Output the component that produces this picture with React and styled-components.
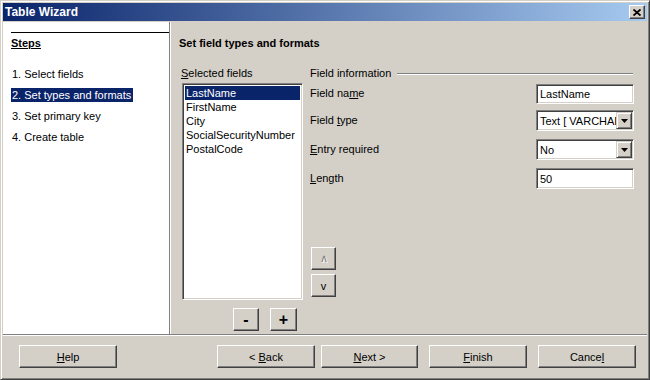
import styled, { createGlobalStyle } from "styled-components"

const GlobalStyle = createGlobalStyle`
    html, body {
        margin: 0;
        padding: 0;
        background: #d4d0c8;
    }
    * {
        box-sizing: border-box;
    }
`

const Window = styled.div`
    width: 650px;
    height: 380px;
    background-color: #d4d0c8;
    border: 1px solid;
    border-color: #d4d0c8 #404040 #404040 #d4d0c8;
    box-shadow: inset 1px 1px #ffffff, inset -1px -1px #808080;
    padding: 2px;
    display: flex;
    flex-direction: column;
    font-family: "Liberation Sans", Arial, sans-serif;
    font-size: 11px;
    color: #000;
`

const TitleBar = styled.div`
    height: 18px;
    margin-bottom: 1px;
    background: linear-gradient(to right, #0a246a, #a6caf0);
    display: flex;
    align-items: center;
    justify-content: space-between;
    padding: 0 2px 0 2px;
    color: #fff;
    font-weight: bold;
    font-size: 12px;
`

const CloseButton = styled.div`
    width: 16px;
    height: 14px;
    background: #d4d0c8;
    border: 1px solid;
    border-color: #ffffff #404040 #404040 #ffffff;
    box-shadow: inset -1px -1px #808080;
    display: flex;
    align-items: center;
    justify-content: center;
`

const Body = styled.div`
    display: flex;
    height: 312px;
`

const StepsPane = styled.div`
    width: 167px;
    background: #fff;
    border-right: 1px solid #808080;
    padding: 10px 0 0 8px;
`

const StepsRule = styled.div`
    height: 1px;
    background: #000;
`

const StepsTitle = styled.div`
    font-weight: bold;
    text-decoration: underline;
    margin-top: 4px;
    line-height: 13px;
`

const StepList = styled.div`
    display: flex;
    flex-direction: column;
    align-items: flex-start;
    gap: 7px;
    margin-top: 17px;
`

const Step = styled.div`
    line-height: 14px;
    padding: 0 2px 0 1px;
    background: ${p => (p.$active ? "#0a246a" : "transparent")};
    color: ${p => (p.$active ? "#fff" : "#000")};
`

const MainPane = styled.div`
    flex: 1;
    padding: 15px 13px 0 9px;
    box-shadow: inset 1px 0 #ffffff;
`

const Heading = styled.div`
    font-weight: bold;
    line-height: 13px;
`

const Columns = styled.div`
    display: flex;
    margin-top: 17px;
`

const ListColumn = styled.div`
    width: 123px;
    margin-left: 2px;
    display: flex;
    flex-direction: column;
`

const Label = styled.div`
    line-height: 13px;
    white-space: nowrap;
`

const Key = styled.span`
    text-decoration: underline;
`

const ListBox = styled.div`
    width: 121px;
    height: 217px;
    margin: 3px 0 0 1px;
    background: #fff;
    border: 1px solid;
    border-color: #808080 #ffffff #ffffff #808080;
    box-shadow: inset 1px 1px #404040, inset -1px -1px #d4d0c8;
    padding: 2px 2px;
`

const ListItem = styled.div`
    line-height: 14px;
    padding-left: 1px;
    background: ${p => (p.$active ? "#0a246a" : "transparent")};
    color: ${p => (p.$active ? "#fff" : "#000")};
`

const ListButtons = styled.div`
    display: flex;
    gap: 11px;
    margin: 8px 0 0 52px;
`

const Button = styled.button`
    width: ${p => p.$w || 98}px;
    height: ${p => p.$h || 23}px;
    margin-left: ${p => p.$ml || 0}px;
    padding: 0;
    background: #d4d0c8;
    border: 1px solid;
    border-color: #ffffff #404040 #404040 #ffffff;
    box-shadow: inset -1px -1px #808080;
    font-family: "Liberation Sans", Arial, sans-serif;
    font-size: ${p => p.$fs || 11}px;
    font-weight: ${p => (p.$bold ? "bold" : "normal")};
    color: ${p => (p.$disabled ? "#808080" : "#000")};
    text-shadow: ${p => (p.$disabled ? "1px 1px #ffffff" : "none")};
    display: flex;
    align-items: center;
    justify-content: center;
    cursor: default;
`

const InfoColumn = styled.div`
    flex: 1;
    margin-left: 6px;
    display: flex;
    flex-direction: column;
`

const GroupHeader = styled.div`
    display: flex;
    align-items: center;
    gap: 6px;
    line-height: 13px;
    margin-bottom: 3px;
`

const GroupLine = styled.div`
    flex: 1;
    height: 2px;
    border-top: 1px solid #808080;
    border-bottom: 1px solid #ffffff;
    margin-right: 1px;
    margin-top: 1px;
`

const FieldRow = styled.div`
    display: flex;
    align-items: center;
    justify-content: space-between;
    height: 21px;
    margin-top: ${p => p.$mt || 0}px;
`

const Sunken = styled.div`
    width: 98px;
    height: ${p => p.$h || 21}px;
    background: #fff;
    border: 1px solid;
    border-color: #808080 #ffffff #ffffff #808080;
    box-shadow: inset 1px 1px #404040, inset -1px -1px #d4d0c8;
    display: flex;
    align-items: center;
    padding: 0 0 0 3px;
    overflow: hidden;
    white-space: nowrap;
`

const ComboText = styled.div`
    flex: 1;
    overflow: hidden;
`

const DropButton = styled.div`
    width: 16px;
    height: 17px;
    margin-right: 1px;
    background: #d4d0c8;
    border: 1px solid;
    border-color: #d4d0c8 #404040 #404040 #d4d0c8;
    box-shadow: inset 1px 1px #ffffff, inset -1px -1px #808080;
    display: flex;
    align-items: center;
    justify-content: center;
    flex-shrink: 0;
`

const MoveButtons = styled.div`
    display: flex;
    flex-direction: column;
    gap: 4px;
    margin: 58px 0 0 1px;
`

const Separator = styled.div`
    height: 2px;
    border-top: 1px solid #808080;
    border-bottom: 1px solid #ffffff;
`

const Footer = styled.div`
    display: flex;
    align-items: flex-start;
    padding: 9px 11px 0 16px;
`

const Spacer = styled.div`
    flex: 1;
`

function Arrow() {
    return (
        <svg width="7" height="4" viewBox="0 0 7 4">
            <path d="M0 0h7L3.5 4z" fill="#000" />
        </svg>
    )
}

function Combo({ value }) {
    return (
        <Sunken $h={21}>
            <ComboText>{value}</ComboText>
            <DropButton><Arrow /></DropButton>
        </Sunken>
    )
}

const steps = ["1. Select fields", "2. Set types and formats", "3. Set primary key", "4. Create table"]
const fields = ["LastName", "FirstName", "City", "SocialSecurityNumber", "PostalCode"]

function App() {
    return (
        <>
            <GlobalStyle />
            <Window>
                <TitleBar>
                    <span>Table Wizard</span>
                    <CloseButton>
                        <svg width="8" height="7" viewBox="0 0 8 7">
                            <path d="M0.5 0.5L7.5 6.5M7.5 0.5L0.5 6.5" stroke="#000" strokeWidth="1.8" />
                        </svg>
                    </CloseButton>
                </TitleBar>
                <Body>
                    <StepsPane>
                        <StepsRule />
                        <StepsTitle>Steps</StepsTitle>
                        <StepList>
                            {steps.map((s, i) => (
                                <Step key={s} $active={i === 1}>{s}</Step>
                            ))}
                        </StepList>
                    </StepsPane>
                    <MainPane>
                        <Heading>Set field types and formats</Heading>
                        <Columns>
                            <ListColumn>
                                <Label><Key>S</Key>elected fields</Label>
                                <ListBox>
                                    {fields.map((f, i) => (
                                        <ListItem key={f} $active={i === 0}>{f}</ListItem>
                                    ))}
                                </ListBox>
                                <ListButtons>
                                    <Button $w={26} $h={23} $fs={16} $bold>-</Button>
                                    <Button $w={27} $h={23} $fs={16} $bold>+</Button>
                                </ListButtons>
                            </ListColumn>
                            <InfoColumn>
                                <GroupHeader>
                                    <span>Field information</span>
                                    <GroupLine />
                                </GroupHeader>
                                <FieldRow $mt={0}>
                                    <Label>Field na<Key>m</Key>e</Label>
                                    <Sunken $h={20}>LastName</Sunken>
                                </FieldRow>
                                <FieldRow $mt={6}>
                                    <Label>Field <Key>t</Key>ype</Label>
                                    <Combo value="Text [ VARCHAR ]" />
                                </FieldRow>
                                <FieldRow $mt={8}>
                                    <Label><Key>E</Key>ntry required</Label>
                                    <Combo value="No" />
                                </FieldRow>
                                <FieldRow $mt={8}>
                                    <Label><Key>L</Key>ength</Label>
                                    <Sunken>50</Sunken>
                                </FieldRow>
                                <MoveButtons>
                                    <Button $w={25} $h={23} $disabled>∧</Button>
                                    <Button $w={25} $h={23}>v</Button>
                                </MoveButtons>
                            </InfoColumn>
                        </Columns>
                    </MainPane>
                </Body>
                <Separator />
                <Footer>
                    <Button><span><Key>H</Key>elp</span></Button>
                    <Spacer />
                    <Button>&lt;&nbsp;<Key>B</Key>ack</Button>
                    <Button $ml={6} $w={97}><span><Key>N</Key>ext &gt;</span></Button>
                    <Button $ml={11}><span><Key>F</Key>inish</span></Button>
                    <Button $ml={11}><span>Cance<Key>l</Key></span></Button>
                </Footer>
            </Window>
        </>
    )
}

export default App
